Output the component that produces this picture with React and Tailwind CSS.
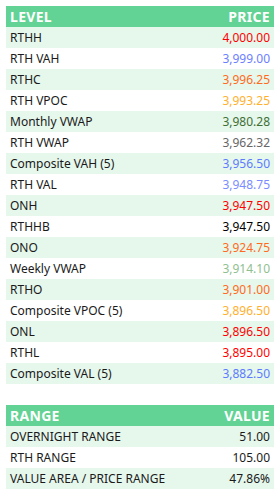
import React from "react";

const LEVELS = [
  ["RTHH", "4,000.00", "text-[#ff0000]"],
  ["RTH VAH", "3,999.00", "text-[#6b80ff]"],
  ["RTHC", "3,996.25", "text-[#ff6a20]"],
  ["RTH VPOC", "3,993.25", "text-[#ffb02e]"],
  ["Monthly VWAP", "3,980.28", "text-[#3f6f35]"],
  ["RTH VWAP", "3,962.32", "text-[#666666]"],
  ["Composite VAH (5)", "3,956.50", "text-[#5d7bff]"],
  ["RTH VAL", "3,948.75", "text-[#7a8cff]"],
  ["ONH", "3,947.50", "text-[#ff0000]"],
  ["RTHHB", "3,947.50", "text-black"],
  ["ONO", "3,924.75", "text-[#ff6a20]"],
  ["Weekly VWAP", "3,914.10", "text-[#8fbf8f]"],
  ["RTHO", "3,901.00", "text-[#ff6a20]"],
  ["Composite VPOC (5)", "3,896.50", "text-[#ffb02e]"],
  ["ONL", "3,896.50", "text-[#ff0000]"],
  ["RTHL", "3,895.00", "text-[#ff0000]"],
  ["Composite VAL (5)", "3,882.50", "text-[#5d7bff]"],
];

const RANGES = [
  ["OVERNIGHT RANGE", "51.00"],
  ["RTH RANGE", "105.00"],
  ["VALUE AREA / PRICE RANGE", "47.86%"],
];

function Table({ head, rows }) {
  return (
    <div className="w-full">
      <div className="flex h-[21px] items-center justify-between bg-[#62d394] px-1 text-[14px] font-bold tracking-[0.3px] text-white">
        <span>{head[0]}</span>
        <span>{head[1]}</span>
      </div>
      {rows.map(([label, value, cls], i) => (
        <div
          key={label}
          className={`flex h-[21px] items-center justify-between px-1 text-[12px] text-[#1a1a1a] ${
            i % 2 === 0 ? "bg-[#e6f7ec]" : "bg-white"
          }`}
        >
          <span>{label}</span>
          <span className={cls || "text-[#1a1a1a]"}>{value}</span>
        </div>
      ))}
    </div>
  );
}

export default function App() {
  return (
    <div
      className="h-[497px] w-[280px] bg-white px-1.5 pt-1.5"
      style={{ fontFamily: "'Noto Sans', sans-serif" }}
    >
      <Table head={["LEVEL", "PRICE"]} rows={LEVELS} />
      <div className="h-[21px]" />
      <Table head={["RANGE", "VALUE"]} rows={RANGES} />
    </div>
  );
}
